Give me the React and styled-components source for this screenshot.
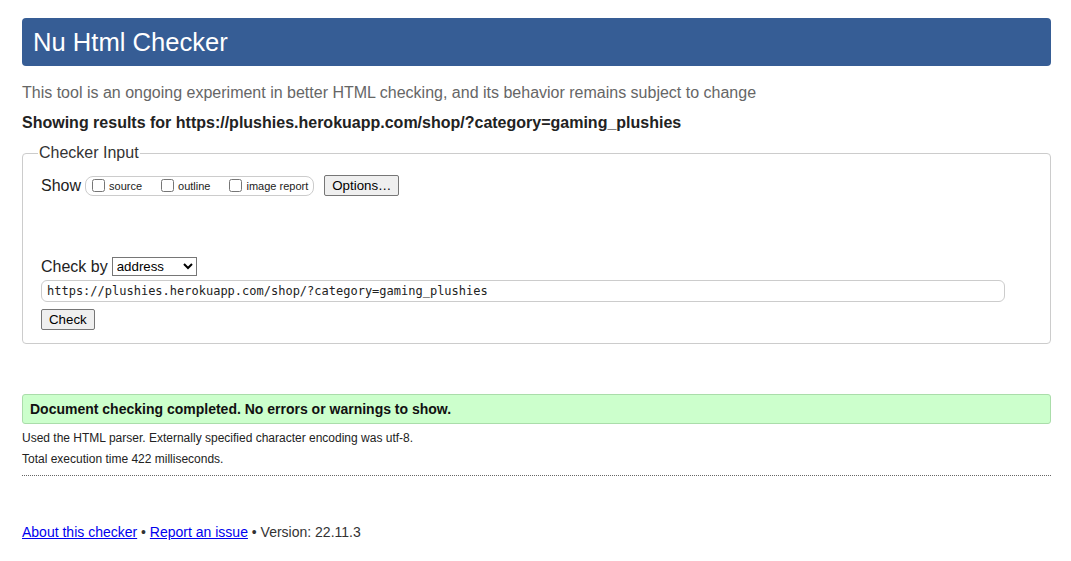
import React from 'react'
import styled, { createGlobalStyle } from 'styled-components'

const Global = createGlobalStyle`
  body {
    margin: 0;
    background: #fff;
    font-family: "Liberation Sans", Arial, sans-serif;
    color: #222;
  }
`

const Page = styled.div`
  padding: 18px 20px 0 22px;
`

const Header = styled.h1`
  margin: 0;
  height: 48px;
  display: flex;
  align-items: center;
  padding: 0 11px;
  background: #365d95;
  border-radius: 4px;
  color: #fff;
  font-size: 25.6px;
  font-weight: normal;
`

const Tagline = styled.p`
  margin: 18px 0 0;
  font-size: 16px;
  line-height: 18px;
  color: #666;
`

const Results = styled.p`
  margin: 12px 0 0;
  font-size: 16px;
  line-height: 18px;
  font-weight: bold;
  color: #222;
`

const Fieldset = styled.fieldset`
  margin: 12px 0 0;
  padding: 10px 18px 13px;
  border: 1px solid #ccc;
  border-radius: 4px;
  box-sizing: border-box;
`

const Legend = styled.legend`
  padding: 0 1px;
  margin-left: -3px;
  font-size: 16px;
  color: #333;
`

const Row = styled.div`
  display: flex;
  align-items: center;
  gap: 4px;
  margin-top: ${p => p.$top || 0}px;
  font-size: 16px;
  color: #222;
`

const Options = styled.span`
  display: inline-flex;
  align-items: center;
  gap: 19px;
  height: 18px;
  padding: 0 5px 0 6px;
  border: 1px solid #ccc;
  border-radius: 8px;
  margin-right: 6px;
`

const CheckLabel = styled.label`
  display: inline-flex;
  align-items: center;
  font-size: 11px;
  color: #222;

  input {
    margin: 0 4px 0 0;
    width: 13px;
    height: 13px;
  }
`

const Button = styled.button`
  font-family: "Liberation Sans", Arial, sans-serif;
  font-size: 13.3px;
  height: 21px;
  padding: 0 7px;
  background: #efefef;
  border: 1px solid #767676;
  border-radius: 2px;
  color: #000;
`

const Select = styled.select`
  font-family: "Liberation Sans", Arial, sans-serif;
  font-size: 13.3px;
  width: 85px;
  height: 19px;
  border: 1px solid #767676;
  border-radius: 0;
  background: #fff;
  color: #000;
  padding: 0;
`

const UrlInput = styled.input`
  display: block;
  margin-top: 4px;
  width: 964px;
  height: 22px;
  box-sizing: border-box;
  border: 1px solid #ccc;
  border-radius: 6px;
  padding: 0 5px;
  font-family: "DejaVu Sans Mono", "Liberation Mono", monospace;
  font-size: 12px;
  color: #222;
`

const CheckRow = styled.div`
  margin-top: 7px;
`

const Success = styled.p`
  margin: 50px 0 0;
  height: 30px;
  box-sizing: border-box;
  display: flex;
  align-items: center;
  padding: 0 7px;
  background: #ccffcc;
  border: 1px solid #aaddaa;
  border-radius: 3px;
  font-size: 14px;
  font-weight: bold;
  color: #111;
`

const Note = styled.p`
  margin: ${p => p.$top}px 0 0;
  font-size: 12px;
  line-height: 14px;
  color: #222;
`

const Divider = styled.hr`
  margin: 9px 0 0;
  border: 0;
  border-top: 1px dotted #666;
`

const Footer = styled.p`
  margin: 48px 0 0;
  font-size: 14px;
  color: #333;

  a {
    color: #00e;
  }
`

export default function App() {
  const url = 'https://plushies.herokuapp.com/shop/?category=gaming_plushies'
  return (
    <Page>
      <Global />
      <Header>Nu Html Checker</Header>
      <Tagline>This tool is an ongoing experiment in better HTML checking, and its behavior remains subject to change</Tagline>
      <Results>Showing results for {url}</Results>

      <Fieldset>
        <Legend>Checker Input</Legend>
        <Row $top={3}>
          Show
          <Options>
            <CheckLabel><input type="checkbox" />source</CheckLabel>
            <CheckLabel><input type="checkbox" />outline</CheckLabel>
            <CheckLabel><input type="checkbox" />image report</CheckLabel>
          </Options>
          <Button>Options…</Button>
        </Row>
        <Row $top={61}>
          Check by
          <Select defaultValue="address">
            <option value="address">address</option>
            <option value="upload">file upload</option>
            <option value="text">text input</option>
          </Select>
        </Row>
        <UrlInput defaultValue={url} />
        <CheckRow>
          <Button>Check</Button>
        </CheckRow>
      </Fieldset>

      <Success>Document checking completed. No errors or warnings to show.</Success>
      <Note $top={7}>Used the HTML parser. Externally specified character encoding was utf-8.</Note>
      <Note $top={7}>Total execution time 422 milliseconds.</Note>
      <Divider />

      <Footer>
        <a href="#about">About this checker</a> • <a href="#issue">Report an issue</a> • Version: 22.11.3
      </Footer>
    </Page>
  )
}
